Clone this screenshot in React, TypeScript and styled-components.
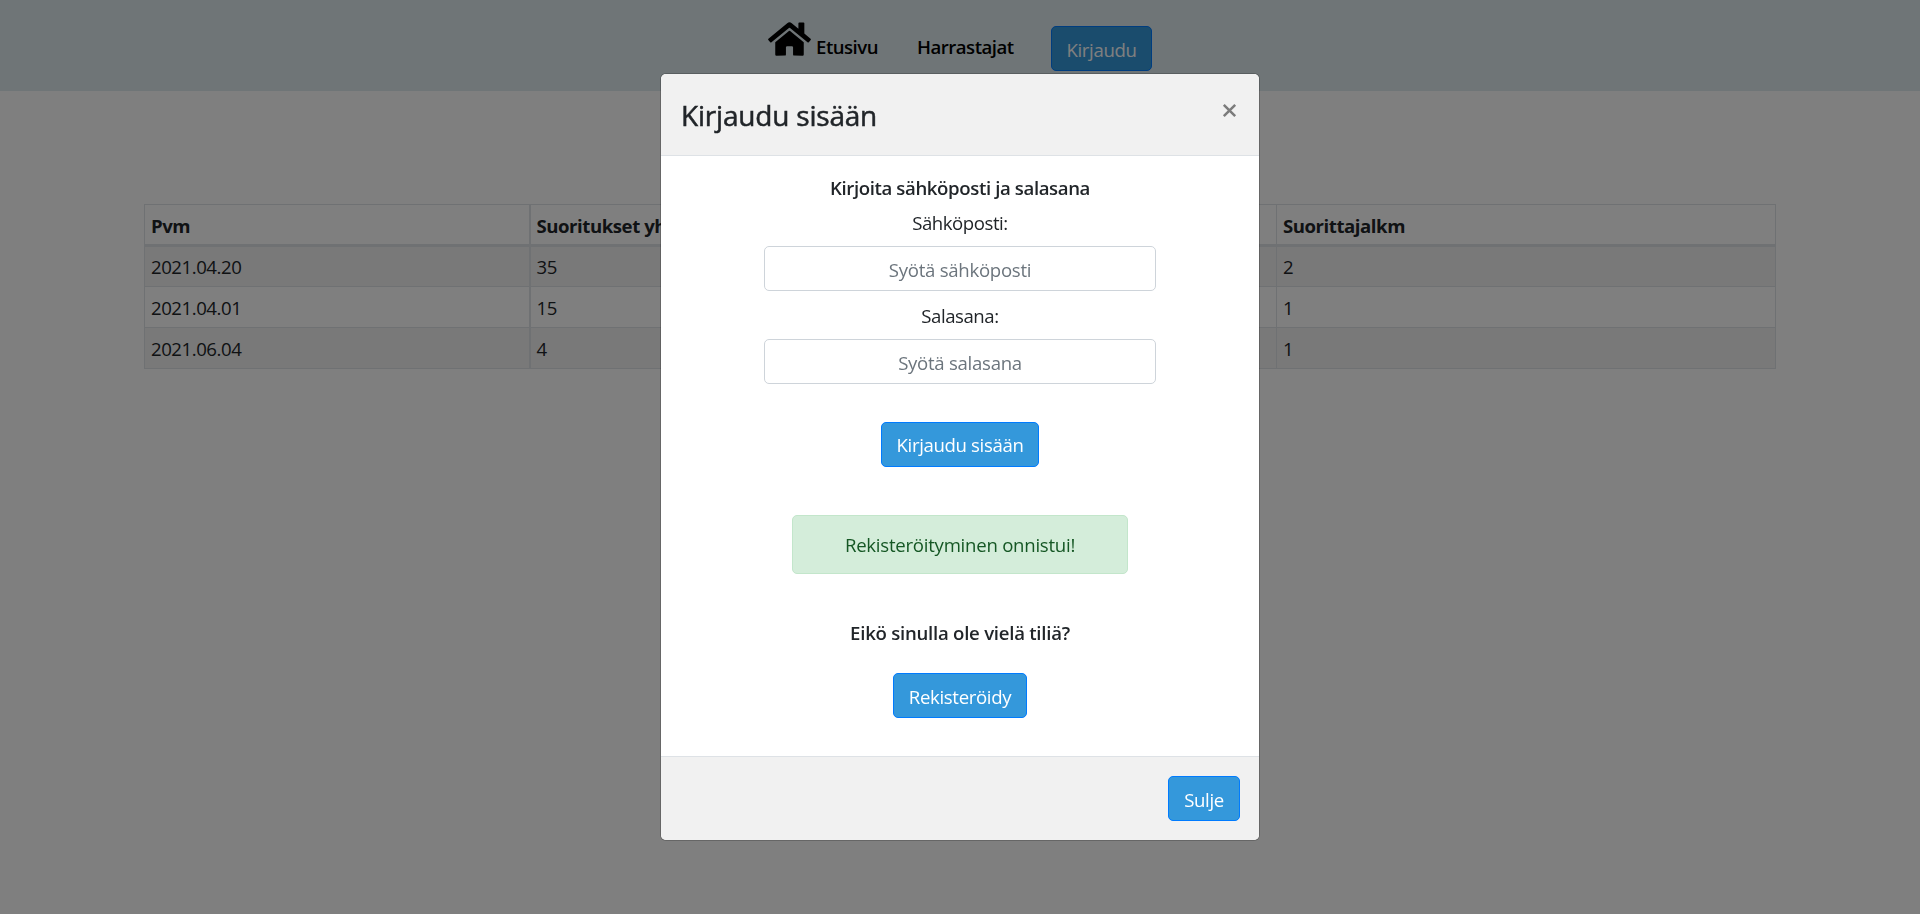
import React from "react";
import styled, { createGlobalStyle } from "styled-components";
import { FaHome } from "react-icons/fa";

const GlobalStyle = createGlobalStyle`
  *, *::before, *::after { box-sizing: border-box; }
  html, body { height: 100%; overflow: hidden; }
  body {
    margin: 0;
    background: #fff;
    color: #212529;
    font-family: "Open Sans", "Noto Sans", sans-serif;
    font-size: 18.6px;
    line-height: 29px;
    letter-spacing: -0.45px;
  }
`;

const Page = styled.div`
  height: 914px;
`;

const NavBar = styled.nav`
  display: flex;
  justify-content: center;
  align-items: flex-start;
  height: 91px;
  background: #dfebef;
  color: #000;
`;

const NavLink = styled.a<{ $width: number }>`
  display: flex;
  width: ${(p) => p.$width}px;
  margin-top: 32px;
  font-weight: 600;
  letter-spacing: -0.5px;
  white-space: nowrap;
`;

const HomeLink = styled(NavLink)`
  margin-top: 20px;
  gap: 5px;

  svg {
    width: 43px;
    height: 38px;
    flex: none;
  }

  span {
    margin-top: 12px;
  }
`;

const Button = styled.button<{ $width: number }>`
  display: block;
  width: ${(p) => p.$width}px;
  height: 45px;
  padding: 8px 0 6px;
  border: 1px solid #007bff;
  border-radius: 5px;
  background: #3498db;
  color: #fff;
  font: inherit;
  letter-spacing: -0.35px;
  text-align: center;
  white-space: nowrap;
`;

const NavButton = styled(Button)`
  margin-top: 26px;
`;

const Table = styled.table`
  width: 1631px;
  margin: 113px 0 0 144px;
  border-collapse: collapse;
  table-layout: fixed;
  border: 1px solid #dee2e6;

  th, td {
    height: 41px;
    padding: 5px 6px;
    border: 1px solid #dee2e6;
    text-align: left;
    white-space: nowrap;
  }

  th {
    padding: 6px 6px 4px;
    border-bottom-width: 3px;
    font-weight: 700;
  }

  th:first-child, td:first-child {
    border-right-width: 2px;
  }

  tbody tr:nth-of-type(odd) {
    background: rgba(0, 0, 0, 0.05);
  }
`;

const Overlay = styled.div`
  position: fixed;
  inset: 0;
  display: flex;
  align-items: center;
  justify-content: center;
  background: rgba(0, 0, 0, 0.5);
`;

const Dialog = styled.section`
  width: 600px;
  border: 1px solid rgba(0, 0, 0, 0.2);
  border-radius: 6px;
  background: #fff;
  background-clip: padding-box;
  overflow: hidden;
`;

const DialogHeader = styled.header`
  display: flex;
  justify-content: space-between;
  height: 82px;
  padding: 20px 22px 0 20px;
  border-bottom: 1px solid #dee2e6;
  background: #f1f1f1;
`;

const DialogTitle = styled.h4`
  margin: 0;
  font-size: 28px;
  font-weight: 500;
  line-height: 43px;
  letter-spacing: -0.2px;
  -webkit-text-stroke: 0.5px currentColor;
`;

const CloseButton = styled.button`
  width: 15px;
  height: 15px;
  margin-top: 9px;
  padding: 0;
  border: 0;
  background: none;
  color: #7c7c7c;

  svg {
    display: block;
    width: 15px;
    height: 15px;
  }
`;

const DialogBody = styled.form`
  display: flex;
  flex-direction: column;
  align-items: center;
  height: 600px;
  padding-top: 20px;
`;

const Heading = styled.h6<{ $spacing: number }>`
  margin: 0 0 8px;
  font-size: inherit;
  font-weight: 600;
  line-height: 24px;
  letter-spacing: ${(p) => p.$spacing}px;
`;

const Label = styled.label`
  margin-bottom: 9px;
`;

const Input = styled.input`
  width: 392px;
  height: 45px;
  margin: 0 0 10px;
  padding: 8px 14px 6px;
  border: 1px solid #ced4da;
  border-radius: 5px;
  font: inherit;
  letter-spacing: -0.28px;
  text-align: center;

  &::placeholder {
    color: #6c757d;
    opacity: 1;
  }
`;

const SubmitButton = styled(Button)`
  margin: 28px 0 48px;
  padding: 7px 0;
`;

const Alert = styled.div`
  width: 336px;
  height: 59px;
  margin-bottom: 47px;
  padding-top: 14px;
  border: 1px solid #c3e6cb;
  border-radius: 5px;
  background: #d4edda;
  color: #155724;
  letter-spacing: -0.25px;
  text-align: center;
`;

const RegisterButton = styled(Button)`
  margin-top: 20px;
`;

const DialogFooter = styled.footer`
  display: flex;
  justify-content: flex-end;
  height: 84px;
  padding: 19px 19px 0;
  border-top: 1px solid #dee2e6;
  background: #f1f1f1;
`;

const rows = [
  ["2021.04.20", "35", "2"],
  ["2021.04.01", "15", "1"],
  ["2021.06.04", "4", "1"],
];

export default function App() {
  return (
    <Page>
      <GlobalStyle />
      <NavBar>
        <HomeLink $width={149}>
          <FaHome />
          <span>Etusivu</span>
        </HomeLink>
        <NavLink $width={134}>Harrastajat</NavLink>
        <NavButton $width={101}>Kirjaudu</NavButton>
      </NavBar>
      <Table>
        <colgroup>
          <col width={385} />
          <col width={747} />
          <col width={499} />
        </colgroup>
        <thead>
          <tr>
            <th>Pvm</th>
            <th>Suoritukset yhteensä</th>
            <th>Suorittajalkm</th>
          </tr>
        </thead>
        <tbody>
          {rows.map((row) => (
            <tr key={row[0]}>
              {row.map((cell, i) => (
                <td key={i}>{cell}</td>
              ))}
            </tr>
          ))}
        </tbody>
      </Table>
      <Overlay>
        <Dialog>
          <DialogHeader>
            <DialogTitle>Kirjaudu sisään</DialogTitle>
            <CloseButton type="button" aria-label="Sulje">
              <svg viewBox="0 0 15 15" stroke="currentColor" strokeWidth="2.5">
                <path d="M1.8 1.8 13.2 13.2M13.2 1.8 1.8 13.2" />
              </svg>
            </CloseButton>
          </DialogHeader>
          <DialogBody>
            <Heading $spacing={-0.38}>Kirjoita sähköposti ja salasana</Heading>
            <Label htmlFor="email">Sähköposti:</Label>
            <Input id="email" placeholder="Syötä sähköposti" />
            <Label htmlFor="password">Salasana:</Label>
            <Input id="password" type="password" placeholder="Syötä salasana" />
            <SubmitButton type="button" $width={158}>Kirjaudu sisään</SubmitButton>
            <Alert>Rekisteröityminen onnistui!</Alert>
            <Heading $spacing={-0.25}>Eikö sinulla ole vielä tiliä?</Heading>
            <RegisterButton type="button" $width={134}>Rekisteröidy</RegisterButton>
          </DialogBody>
          <DialogFooter>
            <Button type="button" $width={72}>Sulje</Button>
          </DialogFooter>
        </Dialog>
      </Overlay>
    </Page>
  );
}
